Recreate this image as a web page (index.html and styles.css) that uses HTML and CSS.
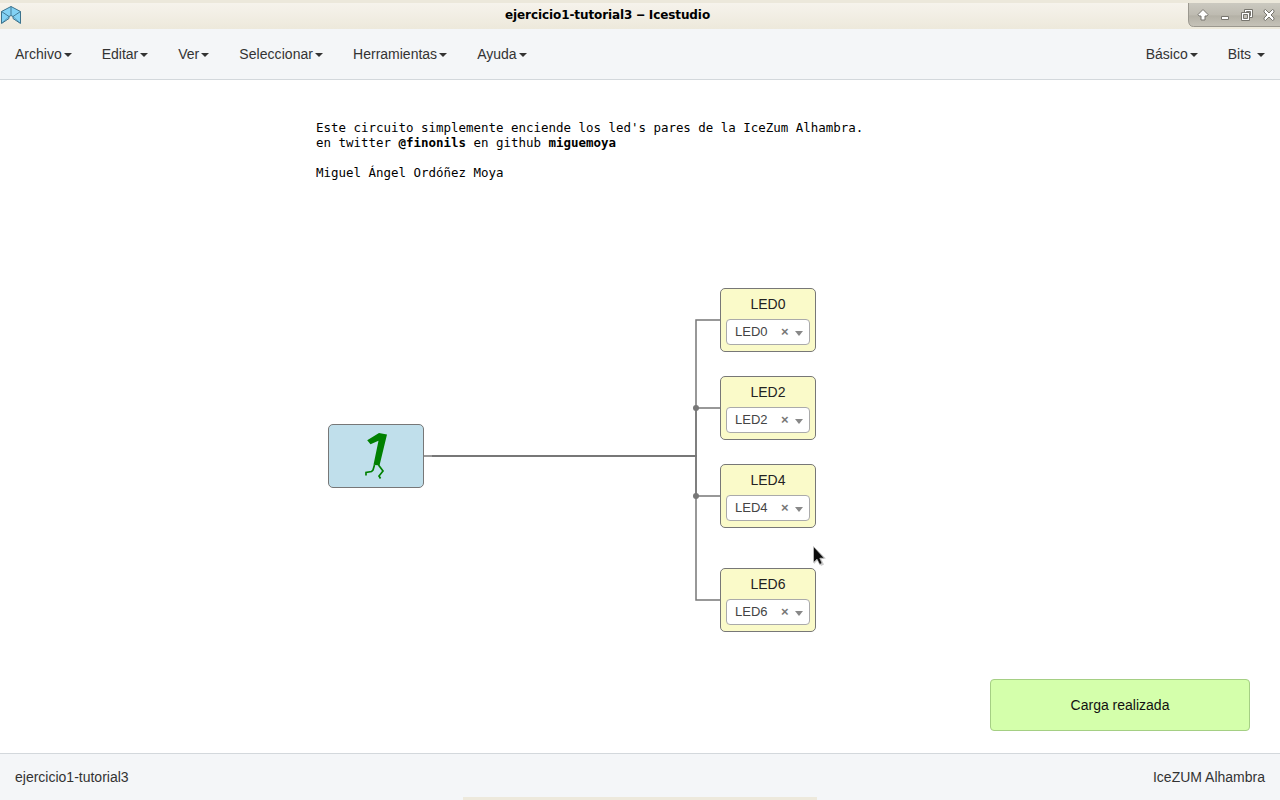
FILE: index.html
```html
<!DOCTYPE html>
<html lang="es">
<head>
<meta charset="utf-8">
<title>ejercicio1-tutorial3 ‒ Icestudio</title>
<link rel="stylesheet" href="styles.css">
</head>
<body>
<header class="titlebar">
  <svg class="logo" width="22" height="20" viewBox="0 0 22 20"><g stroke="#3c728c" stroke-width="1" stroke-linejoin="round"><path d="M1.500 6.500 11 1.500l9.500 5v12L13 13.500V11.500L11 10.500 9 11.500v2l-7.500 5z" fill="#83d2f4"/><path d="M1.500 6.500 9 11.500M11 1.500v9M20.500 6.500 13 11.500" fill="none" stroke-width=".9"/><path d="M2 18 9 11.500M20 18 13 11.500" fill="none" stroke-width=".5"/></g></svg>
  <h1 class="window-title">ejercicio1-tutorial3 ‒ Icestudio</h1>
  <div class="window-controls">
    <svg width="92" height="27" viewBox="0 0 92 27">
      <defs><linearGradient id="metal" x2="0" y2="1"><stop stop-color="#cbc9c0"/><stop offset=".5" stop-color="#bebbb1"/><stop offset=".55" stop-color="#b4b1a6"/><stop offset="1" stop-color="#c6c3b9"/></linearGradient></defs>
      <path d="M.5 3H92v23.500H5.500Q.5 26.500 .5 20z" fill="url(#metal)"/>
      <path d="M.5 3v17q0 6.500 5 6.500H92" fill="none" stroke="#9b988f"/>
      <g fill="#fff" stroke="#77756e" stroke-width="1" stroke-linejoin="round">
        <path d="M15 9.500l5 5-1 1.500h-2v4h-4v-4h-2l-1-1.500z"/>
        <path d="M33.500 16.500h7v3h-7z"/>
        <path d="M56.500 9.500h8v8h-8z"/>
        <path d="M58.500 11.500h4v4h-4z" fill="#c2bfb6"/>
        <path d="M53.500 12.500h8v8h-8z"/>
        <path d="M55.500 14.500h4v4h-4z" fill="#c2bfb6"/>
        <path d="M76 10.500l1.500-1 3.500 3.500 3.500-3.500 1.500 1v1.500l-3 3 3 3v1.500l-1.500 1L81 17l-3.500 3.500-1.500-1V18l3-3-3-3z"/>
      </g>
    </svg>
  </div>
</header>
<nav class="menubar">
  <ul class="menu">
    <li>Archivo<i class="caret"></i></li>
    <li>Editar<i class="caret"></i></li>
    <li>Ver<i class="caret"></i></li>
    <li class="wide">Seleccionar<i class="caret"></i></li>
    <li>Herramientas<i class="caret"></i></li>
    <li>Ayuda<i class="caret"></i></li>
  </ul>
  <ul class="menu">
    <li>Básico<i class="caret"></i></li>
    <li>Bits <i class="caret"></i></li>
  </ul>
</nav>
<main class="canvas">
  <svg class="wires" width="1280" height="673" viewBox="0 80 1280 673">
    <g fill="none" stroke="#777" stroke-width="1.500">
      <path d="M424 456H696V320H720"/>
      <path d="M432 456H696V408H720"/>
      <path d="M432 456H696V496H720"/>
      <path d="M432 456H696V600H720"/>
    </g>
    <g fill="#777"><circle cx="696" cy="408" r="3"/><circle cx="696" cy="496" r="3"/></g>
  </svg>
  <div class="note">Este circuito simplemente enciende los led's pares de la IceZum Alhambra.
en twitter <b>@finonils</b> en github <b>miguemoya</b>

Miguel Ángel Ordóñez Moya</div>
  <div class="block constant">
    <svg width="94" height="62" viewBox="329 425 94 62"><path d="M379 433l8 1.500-7.500 31-6-.8 5-24-8 3.500-3.300-4z" fill="#008000"/><path d="M374.500 465l-1.500 5-1.500 1.500-5.500 1v3M378.500 465l4.500 6-4 5 1.500 2.500" fill="none" stroke="#008000" stroke-width="1.700"/></svg>
  </div>
  <div class="block led led-0"><span class="label">LED0</span><div class="select"><span>LED0</span><b>×</b><i class="arrow"></i></div></div>
  <div class="block led led-2"><span class="label">LED2</span><div class="select"><span>LED2</span><b>×</b><i class="arrow"></i></div></div>
  <div class="block led led-4"><span class="label">LED4</span><div class="select"><span>LED4</span><b>×</b><i class="arrow"></i></div></div>
  <div class="block led led-6"><span class="label">LED6</span><div class="select"><span>LED6</span><b>×</b><i class="arrow"></i></div></div>
  <svg class="pointer" width="14" height="22" viewBox="0 0 14 22"><path d="M1 1v17l4-4 3 6 3-1.500-3-6h5z" fill="#999" opacity=".5"/><path d="M.5.5v16l3.500-3.300 2.700 5.300 2.300-1.300-2.200-5h4.500z" fill="#0c0c0c" stroke="#ccc" stroke-width=".7"/></svg>
  <div class="toast">Carga realizada</div>
</main>
<footer class="statusbar"><span>ejercicio1-tutorial3</span><span>IceZUM Alhambra</span><i class="dock-edge"></i></footer>
</body>
</html>
```
FILE: styles.css
```css
* { box-sizing: border-box; }
body {
  margin: 0;
  width: 1280px;
  height: 800px;
  overflow: hidden;
  display: flex;
  flex-direction: column;
  background: #fff;
  color: #333;
  font: 14px/20px "Liberation Sans", Arial, sans-serif;
}
svg { display: block; }
.titlebar {
  height: 29px;
  display: grid;
  grid-template-columns: 92px 1fr 92px;
  background: linear-gradient(#ece8db 0 3px, #f6f3ec 3px, #eeeadd 26px, #ede9db);
}
.logo { margin-top: 5px; }
.window-title {
  margin: 0;
  padding-right: 65px;
  text-align: center;
  color: #000;
  font: bold 12px/30px "DejaVu Sans", sans-serif;
  letter-spacing: -0.09px;
  white-space: nowrap;
}
.menubar {
  height: 51px;
  display: flex;
  justify-content: space-between;
  background: #f4f6f8;
  border-bottom: 1px solid #d3d8dc;
}
.menu {
  display: flex;
  margin: 0;
  padding: 0;
  list-style: none;
}
.menu li { padding: 15px; white-space: pre; }
.menu .wide { letter-spacing: 0.06px; }
.caret {
  display: inline-block;
  margin-left: 2px;
  vertical-align: middle;
  border: 4px solid transparent;
  border-top-color: #333;
  border-bottom: 0;
}
.canvas { position: relative; height: 673px; }
.wires { position: absolute; inset: 0; }
.note {
  position: absolute;
  left: 316px;
  top: 40px;
  color: #000;
  font: 12.460px/15px "DejaVu Sans Mono", monospace;
  white-space: pre;
}
.block {
  position: absolute;
  width: 96px;
  height: 64px;
  border: 1px solid #777;
  border-radius: 5px;
}
.constant { left: 328px; top: 344px; background: #c0dfeb; }
.led {
  left: 720px;
  padding: 5px;
  background: #fafac9;
  color: #222;
}
.led-0 { top: 208px; }
.led-2 { top: 296px; }
.led-4 { top: 384px; }
.led-6 { top: 488px; }
.label { display: block; height: 25px; text-align: center; }
.select {
  height: 26px;
  display: flex;
  align-items: center;
  padding: 0 6px 0 8px;
  background: #fff;
  border: 1px solid #aaa;
  border-radius: 4px;
  color: #444;
  font-size: 13px;
}
.select span { width: 46px; }
.select b { width: 14px; color: #777; }
.arrow {
  margin-top: 2px;
  border: 4px solid transparent;
  border-top: 5px solid #888;
  border-bottom: 0;
}
.pointer { position: absolute; left: 813px; top: 466px; }
.toast {
  position: absolute;
  left: 990px;
  top: 599px;
  width: 260px;
  height: 52px;
  border: 1px solid #a5cf84;
  border-radius: 4px;
  background: #d4ffab;
  color: #111;
  line-height: 50px;
  text-align: center;
}
.statusbar {
  position: relative;
  height: 47px;
  display: flex;
  justify-content: space-between;
  padding: 13px 15px;
  background: #f4f6f8;
  border-top: 1px solid #d3d8dc;
}
.dock-edge {
  position: absolute;
  left: 463px;
  bottom: 0;
  width: 354px;
  height: 3px;
  background: #ede9dc;
}
```
